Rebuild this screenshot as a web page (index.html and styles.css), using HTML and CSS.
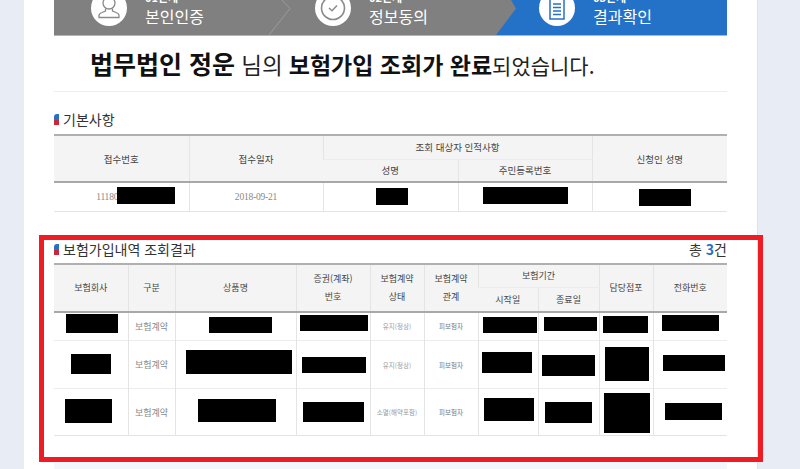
FILE: index.html
```html
<!DOCTYPE html>
<html lang="ko">
<head>
<meta charset="utf-8">
<title>보험가입 조회결과</title>
<link rel="stylesheet" href="styles.css">
</head>
<body>
<main class="panel">
  <div class="stepper">
    <svg class="stepper-bg" width="673" height="35" viewBox="0 0 673 35">
      <polygon points="457,0 462,8.500 442,35 673,35 673,0" fill="#2472c8"/>
      <polyline points="228,0 236,8.500 215,35" fill="none" stroke="#9a9a9a" stroke-width="1"/>
    </svg>
    <div class="step step-1">
      <svg class="step-icon" width="36" height="36" viewBox="0 0 36 36">
        <circle cx="18" cy="18" r="18" fill="#fff"/>
        <circle cx="18" cy="13" r="6" fill="none" stroke="#8a8a8a" stroke-width="1.300"/>
        <path d="M14.500 18.500 L14.500 21 L11 22.500 Q8 23.500 8 25.500 L8 27.500 L28 27.500 L28 25.500 Q28 23.500 25 22.500 L21.500 21 L21.500 18.500" fill="none" stroke="#8a8a8a" stroke-width="1.300"/>
      </svg>
      <div class="step-text"><span class="step-no">01단계</span><span class="step-name">본인인증</span></div>
    </div>
    <div class="step step-2">
      <svg class="step-icon" width="36" height="36" viewBox="0 0 36 36">
        <circle cx="18" cy="18" r="18" fill="#fff"/>
        <circle cx="18" cy="18" r="11.500" fill="none" stroke="#8a8a8a" stroke-width="1.600"/>
        <path d="M14 18 L17 20.800 L22 15.500" fill="none" stroke="#8a8a8a" stroke-width="1.500"/>
      </svg>
      <div class="step-text"><span class="step-no">02단계</span><span class="step-name">정보동의</span></div>
    </div>
    <div class="step step-3">
      <svg class="step-icon" width="36" height="36" viewBox="0 0 36 36">
        <circle cx="18" cy="18" r="18" fill="#fff"/>
        <rect x="11" y="6" width="14" height="23" fill="none" stroke="#2472c8" stroke-width="1.500"/>
        <path d="M14 14H22M14 17.500H22M14 21H22M14 24.500H22" stroke="#2472c8" stroke-width="1.500"/>
      </svg>
      <div class="step-text"><span class="step-no">03단계</span><span class="step-name">결과확인</span></div>
    </div>
  </div>

  <h1 class="headline"><strong class="who">법무법인 정운</strong> <span class="nim">님의</span> <strong class="what">보험가입 조회가 완료</strong><span class="done">되었습니다.</span></h1>

  <section class="basic">
    <h2 class="section-title">기본사항</h2>
    <div class="table-wrap">
      <table class="grid grid-basic">
        <colgroup><col class="b1"><col class="b2"><col class="b3"><col class="b4"><col class="b5"></colgroup>
        <thead>
          <tr class="h-top"><th rowspan="2">접수번호</th><th rowspan="2">접수일자</th><th colspan="2">조회 대상자 인적사항</th><th rowspan="2">신청인 성명</th></tr>
          <tr class="h-sub"><th>성명</th><th>주민등록번호</th></tr>
        </thead>
        <tbody>
          <tr class="row-basic"><td class="num num-left">11180</td><td class="num">2018-09-21</td><td></td><td></td><td></td></tr>
        </tbody>
      </table>
      <i class="mask a1"></i><i class="mask a2"></i><i class="mask a3"></i><i class="mask a4"></i>
    </div>
  </section>

  <section class="result">
    <div class="title-row">
      <h2 class="section-title">보험가입내역 조회결과</h2>
      <p class="total">총 <b>3</b>건</p>
    </div>
    <div class="table-wrap">
      <table class="grid grid-result">
        <colgroup><col class="c1"><col class="c2"><col class="c3"><col class="c4"><col class="c5"><col class="c6"><col class="c7"><col class="c8"><col class="c9"><col class="c10"></colgroup>
        <thead>
          <tr class="h2-top"><th rowspan="2">보험회사</th><th rowspan="2">구분</th><th rowspan="2">상품명</th><th rowspan="2" class="tall">증권(계좌)<br>번호</th><th rowspan="2" class="tall">보험계약<br>상태</th><th rowspan="2" class="tall">보험계약<br>관계</th><th colspan="2">보험기간</th><th rowspan="2">담당점포</th><th rowspan="2">전화번호</th></tr>
          <tr class="h2-sub"><th>시작일</th><th>종료일</th></tr>
        </thead>
        <tbody>
          <tr class="r1"><td></td><td class="kind">보험계약</td><td></td><td></td><td class="state">유지(정상)</td><td class="rel">피보험자</td><td></td><td></td><td></td><td></td></tr>
          <tr class="r2"><td></td><td class="kind">보험계약</td><td></td><td></td><td class="state">유지(정상)</td><td class="rel">피보험자</td><td></td><td></td><td></td><td></td></tr>
          <tr class="r3"><td></td><td class="kind">보험계약</td><td></td><td></td><td class="state">소멸(해약포함)</td><td class="rel">피보험자</td><td></td><td></td><td></td><td></td></tr>
        </tbody>
      </table>
      <i class="mask m11"></i><i class="mask m12"></i><i class="mask m13"></i><i class="mask m14"></i><i class="mask m15"></i><i class="mask m16"></i><i class="mask m17"></i>
      <i class="mask m21"></i><i class="mask m22"></i><i class="mask m23"></i><i class="mask m24"></i><i class="mask m25"></i><i class="mask m26"></i><i class="mask m27"></i>
      <i class="mask m31"></i><i class="mask m32"></i><i class="mask m33"></i><i class="mask m34"></i><i class="mask m35"></i><i class="mask m36"></i><i class="mask m37"></i>
    </div>
  </section>
  <div class="footer-strip"></div>
  <div class="highlight"></div>
</main>
</body>
</html>
```

FILE: styles.css
```css
* { box-sizing: border-box; }
html, body { margin: 0; padding: 0; height: 469px; overflow: hidden; }
body {
  background: #e8ecf4;
  font-family: "Noto Sans CJK KR", "Noto Sans", sans-serif;
  color: #333;
}
.panel {
  position: relative;
  width: 734px;
  height: 469px;
  margin-left: 24px;
  padding: 0 30px;
  background: #fff;
  border-right: 1px solid #dde1ea;
}
.stepper {
  position: relative;
  display: flex;
  width: 673px;
  height: 36px;
  overflow: hidden;
  background: #808080;
  border-bottom: 1px solid #b5b5b5;
}
.stepper-bg { position: absolute; left: 0; top: 0; }
.step {
  position: relative;
  display: flex;
  gap: 18px;
  height: 35px;
}
.step-1 { width: 223px; padding-left: 37px; }
.step-2 { width: 224px; padding-left: 38px; }
.step-3 { flex: 1; padding-left: 38px; }
.step-icon { flex: none; margin-top: -10px; }
.step-text {
  display: flex;
  flex-direction: column;
  margin-top: -10px;
  color: #fff;
}
.step-no { font-size: 11px; line-height: 15px; margin-bottom: 1px; font-weight: 700; }
.step-name { font-size: 16px; line-height: 20px; }

.headline {
  margin: 0;
  height: 56px;
  padding: 12px 0 0 36px;
  border-bottom: 1px solid #eee;
  font-size: 22px;
  line-height: 30px;
  font-weight: 400;
  color: #222;
  white-space: nowrap;
}
.headline strong { font-weight: 700; color: #111; }
.who { font-size: 25px; }
.nim { font-size: 22.500px; }
.what { font-size: 23px; }
.done { font-size: 21px; }

.section-title {
  position: relative;
  margin: 0;
  padding-left: 9px;
  font-size: 14px;
  line-height: 20px;
  font-weight: 400;
  color: #333;
}
.section-title::before {
  content: "";
  position: absolute;
  left: 0;
  top: 5px;
  width: 5px;
  height: 11px;
  border-radius: 3px 0 0 0;
  background: linear-gradient(#2472c8 0 55%, #c8283c 55% 100%);
}
.basic { padding-top: 17px; }
.basic .section-title { margin-bottom: 5px; }
.result { padding-top: 26px; }
.title-row {
  display: flex;
  justify-content: space-between;
  align-items: center;
  height: 22px;
  margin-bottom: 3px;
}
.total { margin: 0; font-size: 14px; line-height: 20px; font-weight: 400; color: #333; }
.total b { color: #2472c8; font-weight: 700; }

.table-wrap { position: relative; }
.grid {
  width: 673px;
  table-layout: fixed;
  border-collapse: collapse;
  border-top: 2px solid #b0b0b0;
  border-bottom: 1px solid #e4e4e4;
}
.grid th, .grid td {
  padding: 0;
  border-left: 1px solid #e4e4e4;
  text-align: center;
  vertical-align: middle;
  font-weight: 400;
}
.grid th:first-child, .grid tbody td:first-child { border-left: 0; }
.grid thead th { background: #f4f4f4; color: #444; font-size: 9px; }
.grid-basic thead th { font-size: 9.500px; }
.grid thead tr:last-child th { border-bottom: 2px solid #a8a8a8; }
.grid thead th[rowspan] { border-bottom: 2px solid #a8a8a8; }
.grid tr.h-top th[colspan], .grid tr.h2-top th[colspan] { border-bottom: 1px solid #ececec; }
.grid th.tall { line-height: 18px; }

.b1 { width: 135px; } .b2 { width: 134px; } .b3 { width: 135px; } .b4 { width: 134px; } .b5 { width: 135px; }
.h-top { height: 24px; }
.h-sub { height: 23px; }
.row-basic { height: 29px; }
.num { font-family: "Liberation Serif", serif; font-size: 9.500px; color: #888; letter-spacing: -0.2px; }
.grid td.num-left { padding-right: 28px; }

.c1 { width: 74px; } .c2 { width: 47px; } .c3 { width: 121px; } .c4 { width: 74px; } .c5 { width: 54px; }
.c6 { width: 54px; } .c7 { width: 60px; } .c8 { width: 61px; } .c9 { width: 54px; } .c10 { width: 74px; }
.h2-top { height: 24px; }
.h2-sub { height: 24px; }
.r1 { height: 29px; } .r2 { height: 48px; } .r3 { height: 47px; }
.grid-result tbody td { border-top: 1px solid #ececec; }
.grid-result tbody tr:first-child td { border-top: 0; }
.kind { font-size: 9px; color: #888; }
.state { font-size: 6.500px; color: #999; white-space: nowrap; }
.rel { font-size: 6.500px; color: #777; }

.mask { position: absolute; background: #000; }
.a1 { left: 63px; top: 53px; width: 58px; height: 17px; }
.a2 { left: 322px; top: 54px; width: 32px; height: 17px; }
.a3 { left: 429px; top: 53px; width: 85px; height: 17px; }
.a4 { left: 585px; top: 55px; width: 52px; height: 17px; }

.m11 { left: 12px; top: 51px; width: 52px; height: 19px; }
.m12 { left: 155px; top: 54px; width: 63px; height: 16px; }
.m13 { left: 246px; top: 52px; width: 68px; height: 16px; }
.m14 { left: 429px; top: 54px; width: 54px; height: 16px; }
.m15 { left: 490px; top: 54px; width: 53px; height: 14px; }
.m16 { left: 549px; top: 53px; width: 45px; height: 17px; }
.m17 { left: 608px; top: 52px; width: 57px; height: 16px; }
.m21 { left: 17px; top: 91px; width: 40px; height: 20px; }
.m22 { left: 132px; top: 87px; width: 106px; height: 24px; }
.m23 { left: 248px; top: 94px; width: 64px; height: 16px; }
.m24 { left: 428px; top: 89px; width: 50px; height: 21px; }
.m25 { left: 488px; top: 92px; width: 53px; height: 21px; }
.m26 { left: 551px; top: 84px; width: 44px; height: 34px; }
.m27 { left: 609px; top: 92px; width: 62px; height: 16px; }
.m31 { left: 11px; top: 136px; width: 47px; height: 24px; }
.m32 { left: 144px; top: 136px; width: 78px; height: 23px; }
.m33 { left: 249px; top: 139px; width: 61px; height: 20px; }
.m34 { left: 430px; top: 135px; width: 50px; height: 23px; }
.m35 { left: 491px; top: 139px; width: 47px; height: 21px; }
.m36 { left: 550px; top: 130px; width: 46px; height: 40px; }
.m37 { left: 611px; top: 140px; width: 57px; height: 17px; }

.footer-strip {
  position: absolute;
  left: 30px;
  top: 463px;
  width: 673px;
  height: 6px;
  background: #f3f6fa;
}
.highlight {
  position: absolute;
  left: 15px;
  top: 235px;
  width: 724px;
  height: 227px;
  border: 5px solid #ee1c25;
}
```
